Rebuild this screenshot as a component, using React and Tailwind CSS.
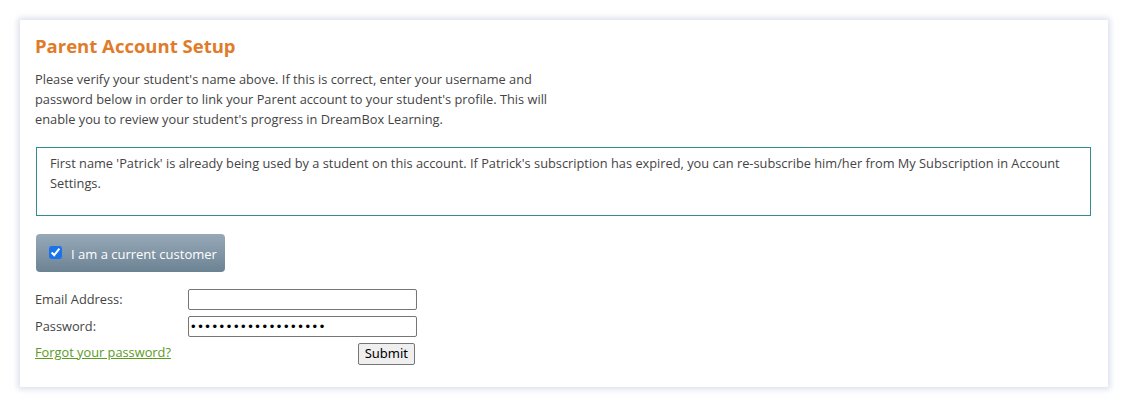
import React from "react";

export default function App() {
  const font = { fontFamily: '"Open Sans", "Noto Sans", sans-serif' };
  return (
    <div className="w-[1128px] h-[408px] bg-white pt-5 pl-5" style={font}>
      <div className="w-[1088px] h-[367px] bg-white shadow-[0_0_6px_2px_rgba(190,200,220,0.6)] pl-[15px] pr-4 pt-[14px]">
        <h1 className="text-[18.5px] leading-[24px] font-bold text-[#e07b2a]">Parent Account Setup</h1>
        <p className="mt-[11px] w-[530px] text-[12.8px] leading-[20px] text-[#444]">
          Please verify your student's name above. If this is correct, enter your username and password below in order to link your Parent account to your student's profile. This will enable you to review your student's progress in DreamBox Learning.
        </p>
        <div className="mt-[18px] ml-px mr-[1px] h-[69px] border border-[#2e8c92] px-[13px] pt-[5px] text-[12.8px] leading-[20px] text-[#444]">
          First name 'Patrick' is already being used by a student on this account. If Patrick's subscription has expired, you can re-subscribe him/her from My Subscription in Account Settings.
        </div>
        <div className="mt-[18px] ml-px flex h-[38px] w-[189px] items-center gap-[9px] rounded-[4px] bg-gradient-to-b from-[#97a9b8] to-[#6c8394] pl-[13px] pt-[4px] text-[13px] text-white">
          <input type="checkbox" defaultChecked className="mb-[6px] h-[13px] w-[13px] accent-[#1a73e8]" />
          <span>I am a current customer</span>
        </div>
        <div className="mt-[17px] grid grid-cols-[153px_229px] gap-y-[6px] text-[12.8px] text-[#444]">
          <div className="flex h-[21px] items-center pt-[1px]">Email Address:</div>
          <input type="text" className="h-[21px] rounded-[2px] border border-[#767676] bg-white" />
          <div className="flex h-[21px] items-center pt-[1px]">Password:</div>
          <input type="password" defaultValue="abcdefghijklmnopqrs" className="h-[21px] rounded-[2px] border border-[#767676] bg-white px-[2px] text-[13px] tracking-[2.6px] text-black" style={{ fontFamily: '"Liberation Sans", sans-serif' }} />
          <div className="flex h-[21px] items-start">
            <a href="#" className="text-[#5b9a25] underline">Forgot your password?</a>
          </div>
          <div className="flex justify-end pr-[2px]">
            <button className="h-[22px] rounded-[2px] border border-[#767676] bg-[#efefef] px-[6px] text-[13px] text-black" style={{ fontFamily: '"Noto Sans", sans-serif' }}>Submit</button>
          </div>
        </div>
      </div>
    </div>
  );
}
